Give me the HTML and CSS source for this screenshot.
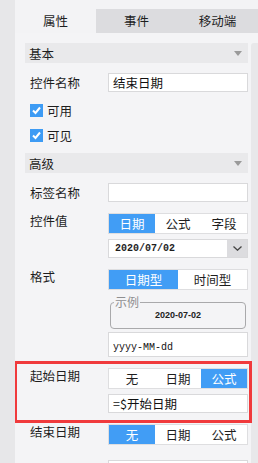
FILE: index.html
```html
<!DOCTYPE html>
<html lang="zh-CN">
<head>
    <meta charset="UTF-8">
    <title>控件属性</title>
    <link rel="stylesheet" href="styles.css">
</head>
<body>
    <div class="shell">
        <div class="side"></div>
        <div class="panel">
            <div class="topbar"></div>
            <div class="tabs">
                <div class="tab active">属性</div>
                <div class="tab">事件</div>
                <div class="tab">移动端</div>
            </div>
            <div class="scroll">
                <div class="content">
                    <div class="group">
                        <span>基本</span>
                        <svg class="caret" width="8" height="5" viewBox="0 0 8 5"><path d="M0 0H8L4 5Z" fill="#9a9a9a"/></svg>
                    </div>

                    <div class="row center first">
                        <div class="label">控件名称</div>
                        <div class="field"><input class="text" value="结束日期"></div>
                    </div>

                    <label class="check c1">
                        <span class="box"><svg width="13" height="13" viewBox="0 0 13 13"><path d="M3 6.5L5.5 9L10 3.5" fill="none" stroke="#fff" stroke-width="2"/></svg></span>可用
                    </label>
                    <label class="check c2">
                        <span class="box"><svg width="13" height="13" viewBox="0 0 13 13"><path d="M3 6.5L5.5 9L10 3.5" fill="none" stroke="#fff" stroke-width="2"/></svg></span>可见
                    </label>

                    <div class="group g2">
                        <span>高级</span>
                        <svg class="caret" width="8" height="5" viewBox="0 0 8 5"><path d="M0 0H8L4 5Z" fill="#9a9a9a"/></svg>
                    </div>

                    <div class="row center first">
                        <div class="label">标签名称</div>
                        <div class="field"><input class="text" value=""></div>
                    </div>

                    <div class="row r-value">
                        <div class="label">控件值</div>
                        <div class="field">
                            <div class="seg three">
                                <span class="on">日期</span><span>公式</span><span>字段</span>
                            </div>
                            <div class="select">
                                <span class="date">2020/07/02</span>
                                <span class="drop"><svg width="9" height="5" viewBox="0 0 9 5"><path d="M0.5 0.5L4.5 4.2L8.5 0.5" fill="none" stroke="#444" stroke-width="1.3"/></svg></span>
                            </div>
                        </div>
                    </div>

                    <div class="row r-format">
                        <div class="label">格式</div>
                        <div class="field">
                            <div class="seg two">
                                <span class="on">日期型</span><span>时间型</span>
                            </div>
                            <fieldset class="sample">
                                <legend>示例</legend>
                                <div class="sample-text">2020-07-02</div>
                            </fieldset>
                            <input class="text pattern" value="yyyy-MM-dd">
                        </div>
                    </div>

                    <div class="row r-start">
                        <div class="label">起始日期</div>
                        <div class="field">
                            <div class="seg three">
                                <span>无</span><span>日期</span><span class="on">公式</span>
                            </div>
                            <input class="text formula" value="=$开始日期">
                        </div>
                    </div>

                    <div class="row r-end">
                        <div class="label">结束日期</div>
                        <div class="field">
                            <div class="seg three">
                                <span class="on">无</span><span>日期</span><span>公式</span>
                            </div>
                            <input class="text next" value="">
                        </div>
                    </div>
                </div>
                <div class="bar"></div>
            </div>
        </div>
    </div>
</body>
</html>
```
FILE: styles.css
```css
body {
    margin: 0;
    font-family: "Noto Sans CJK SC", "Noto Sans", sans-serif;
    font-size: 12px;
    color: #1e1e1e;
    overflow: hidden;
}
.shell {
    display: flex;
    width: 258px;
    height: 463px;
    overflow: hidden;
    background: #f4f4f6;
}
.side {
    width: 15px;
    flex: none;
    background: #e7e7e9;
}
.panel {
    flex: 1;
    display: flex;
    flex-direction: column;
    min-height: 0;
}
.topbar {
    flex: none;
    height: 9px;
    background: #f3f3f5;
}
.tabs {
    flex: none;
    display: flex;
    height: 24px;
    background: #dcdcdf;
}
.tab {
    flex: 1;
    line-height: 24px;
    text-align: center;
    font-size: 12.5px;
}
.tab.active {
    background: #f3f3f5;
}
.scroll {
    display: flex;
    flex: 1;
    min-height: 0;
    overflow: hidden;
}
.content {
    flex: 1;
    padding: 10px 3px 0 10px;
}
.bar {
    width: 7px;
    margin-top: 10px;
    background: #e8e8ea;
    border-radius: 3px 0 0 0;
}
.group {
    display: flex;
    align-items: center;
    justify-content: space-between;
    height: 20px;
    padding: 0 6px 0 4px;
    background: #e9e9eb;
    font-size: 12.5px;
}
.group.g2 {
    margin-top: 11px;
}
.row {
    display: flex;
    align-items: flex-start;
}
.row.center {
    align-items: center;
}
.row.first {
    margin-top: 10px;
}
.label {
    width: 78px;
    padding-left: 5px;
    flex: none;
    font-size: 12.5px;
    line-height: 14px;
}
.row:not(.center) .label {
    padding-top: 1px;
}
.field {
    flex: 1;
    display: flex;
    flex-direction: column;
}
.text {
    box-sizing: border-box;
    width: 100%;
    height: 19px;
    margin: 0;
    padding: 0 4px;
    border: 1px solid #d9d9db;
    background: #fff;
    font-family: inherit;
    font-size: 12.5px;
    color: #111;
    outline: none;
}
.check {
    display: flex;
    align-items: center;
    gap: 4px;
    height: 13px;
    padding-left: 5px;
    font-size: 12.5px;
}
.check.c1 {
    margin-top: 12px;
}
.check.c2 {
    margin-top: 12px;
}
.box {
    width: 13px;
    height: 13px;
    background: #3d9bf4;
    display: block;
}
.box svg {
    display: block;
}
.r-value {
    margin-top: 11px;
}
.r-format {
    margin-top: 11px;
}
.r-start {
    margin-top: 11px;
    position: relative;
}
.r-start::after {
    content: "";
    position: absolute;
    top: -7px;
    bottom: -10px;
    left: -11px;
    right: -4px;
    border: 3px solid #f03a3c;
    pointer-events: none;
}
.r-end {
    margin-top: 11px;
}
.seg {
    display: flex;
    height: 21px;
    box-sizing: border-box;
    border: 1px solid #dedee0;
    background: #fff;
}
.seg span {
    flex: 1;
    text-align: center;
    line-height: 19px;
    font-size: 12.5px;
}
.seg span.on {
    background: #419df5;
    color: #fff;
}
.select {
    display: flex;
    height: 19px;
    margin-top: 5px;
    box-sizing: border-box;
    border: 1px solid #d9d9db;
    background: #fff;
}
.date {
    flex: 1;
    padding-left: 6px;
    font-family: "Liberation Mono", monospace;
    font-size: 10px;
    font-weight: bold;
    line-height: 17px;
}
.drop {
    width: 20px;
    display: flex;
    align-items: center;
    justify-content: center;
    background: #dcdcdf;
}
.sample {
    margin: 8px 2px 0 2px;
    padding: 0;
    height: 31px;
    box-sizing: border-box;
    border: 1px solid #a9a9ab;
    border-radius: 4px;
}
.sample legend {
    margin-left: 3px;
    padding: 0 1px;
    color: #8f8f91;
    font-size: 12px;
    line-height: 8px;
}
.sample-text {
    text-align: center;
    font-family: "Liberation Sans", sans-serif;
    font-size: 9px;
    font-weight: bold;
    color: #222;
    line-height: 14px;
    padding-top: 2px;
}
.pattern {
    height: 25px;
    margin-top: 3px;
    font-family: "Liberation Mono", monospace;
    font-size: 10px;
    padding-top: 6px;
}
.formula {
    margin-top: 5px;
}
.next {
    margin-top: 15px;
}
```
